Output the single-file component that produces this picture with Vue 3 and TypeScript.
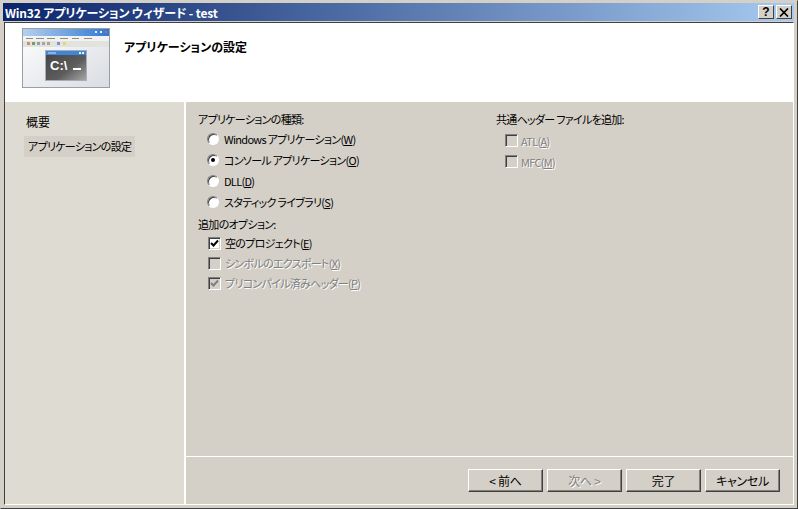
<script setup lang="ts">
interface Option { label: string; key: string; rest?: string; checked?: boolean; disabled?: boolean }
const radios: Option[] = [
  { label: 'Windows アプリケーション(', key: 'W', rest: ')' },
  { label: 'コンソール アプリケーション(', key: 'O', rest: ')', checked: true },
  { label: 'DLL(', key: 'D', rest: ')' },
  { label: 'スタティック ライブラリ(', key: 'S', rest: ')' },
]
const extras: Option[] = [
  { label: '空のプロジェクト(', key: 'E', rest: ')', checked: true },
  { label: 'シンボルのエクスポート(', key: 'X', rest: ')', disabled: true },
  { label: 'プリコンパイル済みヘッダー(', key: 'P', rest: ')', checked: true, disabled: true },
]
const headers: Option[] = [
  { label: 'ATL(', key: 'A', rest: ')', disabled: true },
  { label: 'MFC(', key: 'M', rest: ')', disabled: true },
]
const buttons = [
  { label: '< 前へ', disabled: false },
  { label: '次へ >', disabled: true },
  { label: '完了', disabled: false },
  { label: 'キャンセル', disabled: false },
]
</script>

<template>
  <div class="window">
    <div class="titlebar">
      <span class="title">Win32 アプリケーション ウィザード - test</span>
      <span class="caps">
        <span class="cap">?</span>
        <span class="cap cap-x">
          <svg width="10" height="9" viewBox="0 0 10 9"><path d="M1 0.5 9 8.5M9 0.5 1 8.5" stroke="#000" stroke-width="1.7" fill="none" /></svg>
        </span>
      </span>
    </div>
    <div class="client">
      <header class="banner">
        <svg class="thumb" width="88" height="60" viewBox="0 0 88 60">
          <defs>
            <linearGradient id="bg" x1="0" y1="0" x2="1" y2="1"><stop offset="0" stop-color="#ffffff" /><stop offset="1" stop-color="#d9dce2" /></linearGradient>
            <linearGradient id="tb" x1="0" y1="0" x2="1" y2="0"><stop offset="0" stop-color="#b4d0ee" /><stop offset="1" stop-color="#3179d2" /></linearGradient>
            <linearGradient id="con" x1="0" y1="0" x2="1" y2="1"><stop offset="0" stop-color="#444444" /><stop offset="0.6" stop-color="#5c5c5c" /><stop offset="1" stop-color="#a8a8a8" /></linearGradient>
          </defs>
          <rect x="0.5" y="0.5" width="87" height="59" fill="url(#bg)" stroke="#9a9ea6" />
          <rect x="1" y="1" width="86" height="7" fill="url(#tb)" />
          <path d="M73 4h2M78 4h2" stroke="#e8f0fa" stroke-width="2" />
          <path d="M83 4h2" stroke="#c86a5a" stroke-width="2" />
          <rect x="1" y="8" width="86" height="5" fill="#f2f2f0" />
          <rect x="1" y="13" width="86" height="6" fill="#e2e2df" />
          <path d="M4 10.5h7M14 10.5h8M25 10.5h8M38 10.5h8M50 10.5h7M62 10.5h8" stroke="#8a8a8a" stroke-width="1" />
          <path d="M5 15.5h3" stroke="#c9955a" stroke-width="3" />
          <path d="M10 15.5h3" stroke="#6fa06a" stroke-width="3" />
          <path d="M15 15.5h3" stroke="#8fa0a8" stroke-width="3" />
          <path d="M20 15.5h3M25 15.5h3" stroke="#a8a890" stroke-width="3" />
          <path d="M35 15.5h3" stroke="#7f8fd0" stroke-width="3" />
          <path d="M41 15.5h3" stroke="#e6d860" stroke-width="3" />
          <rect x="23.5" y="22.5" width="41" height="30" fill="url(#con)" stroke="#a6adb8" />
          <rect x="24" y="23" width="40" height="4" fill="#3f86d8" />
          <path d="M26 25h8" stroke="#cfe0f4" stroke-width="1" />
          <path d="M57 25h2M60 25h2" stroke="#e8f0fa" stroke-width="2" />
          <text x="28" y="42" class="prompt">C:\</text>
          <rect x="51" y="40" width="8" height="2" fill="#fff" />
        </svg>
        <h1 class="banner-title">アプリケーションの設定</h1>
      </header>
      <div class="middle">
        <nav class="side">
          <div class="side-item first">概要</div>
          <div class="side-item current">アプリケーションの設定</div>
        </nav>
        <main class="pane">
          <div class="form">
            <div class="col-left">
              <div class="legend">アプリケーションの種類:</div>
              <div class="group radios">
                <label v-for="o in radios" :key="o.key" class="row">
                  <span class="radio"><i v-if="o.checked" class="dot"></i></span>
                  <span>{{ o.label }}<u>{{ o.key }}</u>{{ o.rest }}</span>
                </label>
              </div>
              <div class="legend second">追加のオプション:</div>
              <div class="group checks">
                <label v-for="o in extras" :key="o.key" class="row" :class="{ off: o.disabled }">
                  <span class="check">
                    <svg v-if="o.checked" width="9" height="9" viewBox="0 0 9 9"><path d="M1 4 3.5 6.5 8 1.5" fill="none" stroke-width="2" /></svg>
                  </span>
                  <span class="etched">{{ o.label }}<u>{{ o.key }}</u>{{ o.rest }}</span>
                </label>
              </div>
            </div>
            <div class="col-right">
              <div class="legend">共通ヘッダー ファイルを追加:</div>
              <div class="group headers">
                <label v-for="o in headers" :key="o.key" class="row off">
                  <span class="check"></span>
                  <span class="etched">{{ o.label }}<u>{{ o.key }}</u>{{ o.rest }}</span>
                </label>
              </div>
            </div>
          </div>
          <footer class="actions">
            <button v-for="b in buttons" :key="b.label" class="btn" :class="{ off: b.disabled }" type="button">
              <span class="etched">{{ b.label }}</span>
            </button>
          </footer>
        </main>
      </div>
    </div>
  </div>
</template>

<style>
html, body { margin: 0; background: #d4d0c8; }
</style>

<style scoped>
.window {
  width: 798px;
  height: 509px;
  box-sizing: border-box;
  display: flex;
  flex-direction: column;
  background: #d4d0c8;
  border: 1px solid;
  border-color: #d4d0c8 #404040 #404040 #d4d0c8;
  padding: 2px 3px 3px 2px;
  font-family: "Noto Sans CJK JP", "Liberation Sans", sans-serif;
  font-size: 11px;
  letter-spacing: -0.7px;
  font-feature-settings: "palt";
  color: #000;
  overflow: hidden;
}
.titlebar {
  height: 18px;
  flex: none;
  display: flex;
  align-items: center;
  justify-content: space-between;
  padding: 0 2px 0 2px;
  background: linear-gradient(90deg, #0a246a, #a6caf0);
}
.title { color: #fff; font-weight: 700; font-size: 12px; letter-spacing: -0.15px; }
.caps { display: flex; gap: 2px; }
.cap {
  width: 16px;
  height: 14px;
  box-sizing: border-box;
  background: #d4d0c8;
  border: 1px solid;
  border-color: #fff #404040 #404040 #fff;
  display: flex;
  align-items: center;
  justify-content: center;
  font: 700 12px/12px "Liberation Sans", sans-serif;
  letter-spacing: 0;
}
.client {
  flex: 1;
  display: flex;
  flex-direction: column;
  margin: 1px 0 0 1px;
  border-top: 1px solid #404040;
  border-left: 1px solid #404040;
  border-bottom: 1px solid #fff;
  border-right: 1px solid #fff;
  min-height: 0;
}
.banner {
  height: 79px;
  flex: none;
  display: flex;
  align-items: flex-start;
  background: #fff;
  padding: 5px 0 0 17px;
  box-sizing: border-box;
}
.thumb { flex: none; }
.prompt { font: 700 13px "Liberation Sans", sans-serif; fill: #fff; letter-spacing: 0; }
.banner-title {
  margin: 9px 0 0 14px;
  font-size: 12px;
  letter-spacing: 0;
  line-height: 20px;
  font-weight: 700;
}
.middle { flex: 1; display: flex; min-height: 0; }
.side {
  width: 181px;
  flex: none;
  box-sizing: border-box;
  padding: 10px 0 0 19px;
  background: #dedbd3;
  border-right: 2px solid #fff;
}
.side-item { height: 21px; line-height: 19px; padding-left: 4px; width: 111px; box-sizing: border-box; white-space: nowrap; }
.first { padding-left: 2px; margin-bottom: 3px; font-size: 12px; letter-spacing: 0; }
.current { background: #d4d0c8; line-height: 21px; }
.pane { flex: 1; display: flex; flex-direction: column; min-width: 0; background: #d4d0c8; }
.form { flex: 1; display: flex; padding: 8px 0 0 12px; border-bottom: 1px solid #fff; min-height: 0; }
.col-left { width: 298px; flex: none; }
.legend { line-height: 18px; height: 18px; }
.second { margin-top: 3px; }
.group { display: flex; flex-direction: column; padding-left: 10px; }
.row { display: flex; align-items: center; gap: 4px; height: 21px; line-height: 20px; white-space: nowrap; }
.checks .row { height: 20px; }
.headers { padding: 2px 0 0 9px; }
.headers .row { height: 21px; gap: 3px; }
.radios .row { gap: 5px; }
.radios .radio { margin-left: -1px; }
.radio {
  width: 12px;
  height: 12px;
  flex: none;
  box-sizing: border-box;
  border-radius: 50%;
  background: #fff;
  border: 1px solid;
  border-color: #808080 #fff #fff #808080;
  box-shadow: inset 1px 1px 0 #404040;
  display: flex;
  align-items: center;
  justify-content: center;
}
.dot { width: 4px; height: 4px; border-radius: 50%; background: #000; display: block; }
.check {
  width: 13px;
  height: 13px;
  flex: none;
  box-sizing: border-box;
  background: #fff;
  border: 1px solid;
  border-color: #808080 #fff #fff #808080;
  box-shadow: inset 1px 1px 0 #404040, inset -1px -1px 0 #d4d0c8;
  display: flex;
  align-items: center;
  justify-content: center;
  stroke: #000;
}
.row.off .check { background: #d4d0c8; stroke: #808080; }
.row.off .etched, .btn.off .etched { color: #808080; text-shadow: 1px 1px 0 #fff; }
.actions {
  height: 47px;
  flex: none;
  box-sizing: border-box;
  display: flex;
  justify-content: flex-end;
  gap: 4px;
  padding: 12px 13px 0 0;
}
.btn {
  width: 75px;
  height: 23px;
  padding: 0;
  box-sizing: border-box;
  background: #d4d0c8;
  border: 1px solid;
  border-color: #fff #404040 #404040 #fff;
  box-shadow: inset -1px -1px 0 #808080;
  font: inherit;
  font-size: 12px;
  letter-spacing: -0.3px;
  font-feature-settings: "palt";
  color: #000;
  line-height: 19px;
}
</style>
